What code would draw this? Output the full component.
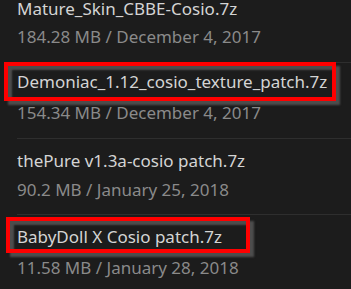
import React from "react";

type Item = { name: string; meta: string; box?: string; titleCls: string; metaShift: string };

const items: Item[] = [
  {
    name: "Mature_Skin_CBBE-Cosio.7z",
    meta: "184.28 MB / December 4, 2017",
    titleCls: "leading-[18px]",
    metaShift: "mt-[8px]",
  },
  {
    name: "Demoniac_1.12_cosio_texture_patch.7z",
    meta: "154.34 MB / December 4, 2017",
    box: "left-[4px] -top-[1px] w-[332px] h-[39px]",
    titleCls: "leading-[24px] -mt-[3px]",
    metaShift: "mt-[8px]",
  },
  {
    name: "thePure v1.3a-cosio patch.7z",
    meta: "90.2 MB / January 25, 2018",
    titleCls: "leading-[24px]",
    metaShift: "mt-[6px]",
  },
  {
    name: "BabyDoll X Cosio patch.7z",
    meta: "11.58 MB / January 28, 2018",
    box: "left-[6px] top-[2px] w-[244px] h-[36px]",
    titleCls: "leading-[24px]",
    metaShift: "mt-[8px]",
  },
];

export default function App() {
  return (
    <div
      className="w-[351px] h-[289px] overflow-hidden bg-[#1c1c1c]"
      style={{ fontFamily: '"Noto Sans", "Open Sans", sans-serif' }}
    >
      {items.map((it, i) => (
        <div
          key={i}
          className={`relative ml-[17px] ${i > 0 ? "h-[76px] pt-[10px] border-t border-[#2e2e2e]" : "h-[62px]"}`}
        >
          <div className={`text-[17px] text-[#d4d4d4] whitespace-nowrap ${it.titleCls}`}>{it.name}</div>
          <div className={`text-[17px] leading-[22px] text-[#8a8a8a] whitespace-nowrap ${it.metaShift}`}>
            {it.meta}
          </div>
          {it.box && (
            <div
              className={`absolute -ml-[17px] border-[4px] border-[#ff0000] shadow-[4px_4px_2px_rgba(110,110,110,0.6),inset_4px_4px_2px_rgba(110,110,110,0.6)] ${it.box}`}
            />
          )}
        </div>
      ))}
    </div>
  );
}
